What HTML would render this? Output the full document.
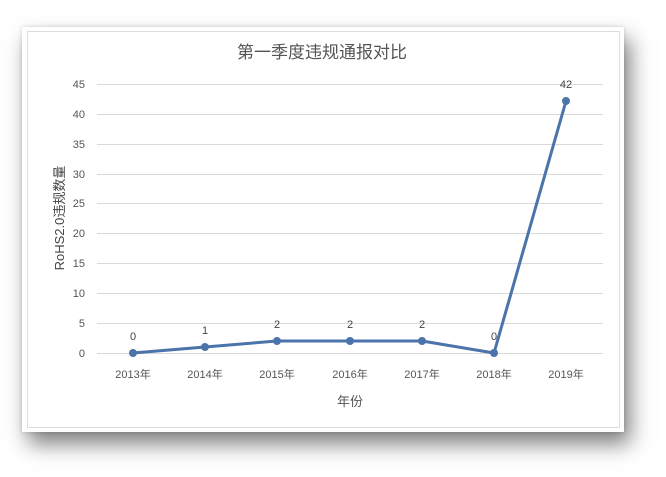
<!DOCTYPE html>
<html><head><meta charset="utf-8"><style>
body{margin:0;width:666px;height:477px;background:#fff;overflow:hidden;font-family:"Liberation Sans","Noto Sans CJK SC",sans-serif}
.card{position:absolute;left:22px;top:27px;width:602px;height:405px;background:#fff;box-shadow:6px 12px 20px rgba(0,0,0,.5),0 0 4px rgba(0,0,0,.15)}
</style></head><body>
<div class="card"></div>
<svg width="666" height="477" style="position:absolute;left:0;top:0">
<rect x="27.5" y="31.5" width="592" height="396" fill="none" stroke="#ddd"/>
<text x="322" y="58" text-anchor="middle" font-size="17" fill="#555">第一季度违规通报对比</text>
<g stroke="#d9d9d9" stroke-width="1">
<line x1="97" x2="603" y1="84.5" y2="84.5"/><line x1="97" x2="603" y1="114.5" y2="114.5"/>
<line x1="97" x2="603" y1="144.5" y2="144.5"/><line x1="97" x2="603" y1="174.5" y2="174.5"/>
<line x1="97" x2="603" y1="203.5" y2="203.5"/><line x1="97" x2="603" y1="233.5" y2="233.5"/>
<line x1="97" x2="603" y1="263.5" y2="263.5"/><line x1="97" x2="603" y1="293.5" y2="293.5"/>
<line x1="97" x2="603" y1="323.5" y2="323.5"/><line x1="97" x2="603" y1="353.5" y2="353.5"/>
</g>
<g font-size="11" fill="#555" text-anchor="end">
<text x="85" y="88">45</text><text x="85" y="118">40</text><text x="85" y="148">35</text><text x="85" y="178">30</text><text x="85" y="207">25</text><text x="85" y="237">20</text><text x="85" y="267">15</text><text x="85" y="297">10</text><text x="85" y="327">5</text><text x="85" y="357">0</text>
</g>
<text transform="translate(64,218) rotate(-90)" text-anchor="middle" font-size="13" fill="#444">RoHS2.0违规数量</text>
<polyline points="133,353 205,347 277,341 350,341 422,341 494,353 566,101" fill="none" stroke="#4a74aa" stroke-width="3" stroke-linejoin="round"/>
<g fill="#4a74aa"><circle cx="133" cy="353" r="4"/><circle cx="205" cy="347" r="4"/><circle cx="277" cy="341" r="4"/><circle cx="350" cy="341" r="4"/><circle cx="422" cy="341" r="4"/><circle cx="494" cy="353" r="4"/><circle cx="566" cy="101" r="4"/></g>
<g font-size="11" fill="#444" text-anchor="middle">
<text x="133" y="340">0</text><text x="205" y="334">1</text><text x="277" y="328">2</text><text x="350" y="328">2</text><text x="422" y="328">2</text><text x="494" y="340">0</text><text x="566" y="88">42</text>
</g>
<g font-size="11" fill="#555" text-anchor="middle">
<text x="133" y="378">2013年</text><text x="205" y="378">2014年</text><text x="277" y="378">2015年</text><text x="350" y="378">2016年</text><text x="422" y="378">2017年</text><text x="494" y="378">2018年</text><text x="566" y="378">2019年</text>
</g>
<text x="350" y="406" text-anchor="middle" font-size="13" fill="#555">年份</text>
</svg>
</body></html>
